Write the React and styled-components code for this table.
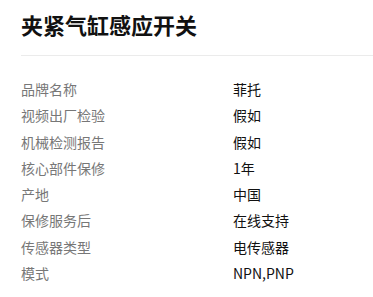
import React from "react";
import styled, { createGlobalStyle } from "styled-components";

const GlobalStyle = createGlobalStyle`
  body {
    margin: 0;
    background: #fff;
    font-family: "Noto Sans CJK SC", "Noto Sans", sans-serif;
  }
`;

const Wrapper = styled.div`
  padding: 0 0 0 21px;
`;

const Title = styled.h1`
  margin: 0;
  padding-top: 8px;
  padding-bottom: 15px;
  font-size: 22px;
  line-height: 32px;
  font-weight: 700;
  color: #111;
  border-bottom: 1px solid #ebebeb;
`;

const SpecList = styled.dl`
  margin: 0;
  padding-top: 20px;
`;

const Row = styled.div`
  display: grid;
  grid-template-columns: 212px 1fr;
  font-size: 14px;
  line-height: 26.3px;
`;

const Label = styled.dt`
  margin: 0;
  color: #777;
`;

const Value = styled.dd`
  margin: 0;
  color: #111;
`;

const specs = [
  ["品牌名称", "菲托"],
  ["视频出厂检验", "假如"],
  ["机械检测报告", "假如"],
  ["核心部件保修", "1年"],
  ["产地", "中国"],
  ["保修服务后", "在线支持"],
  ["传感器类型", "电传感器"],
  ["模式", "NPN,PNP"],
];

const App = () => {
  return (
    <Wrapper>
      <GlobalStyle />
      <Title>夹紧气缸感应开关</Title>
      <SpecList>
        {specs.map(([label, value]) => (
          <Row key={label}>
            <Label>{label}</Label>
            <Value>{value}</Value>
          </Row>
        ))}
      </SpecList>
    </Wrapper>
  );
};

export default App;
